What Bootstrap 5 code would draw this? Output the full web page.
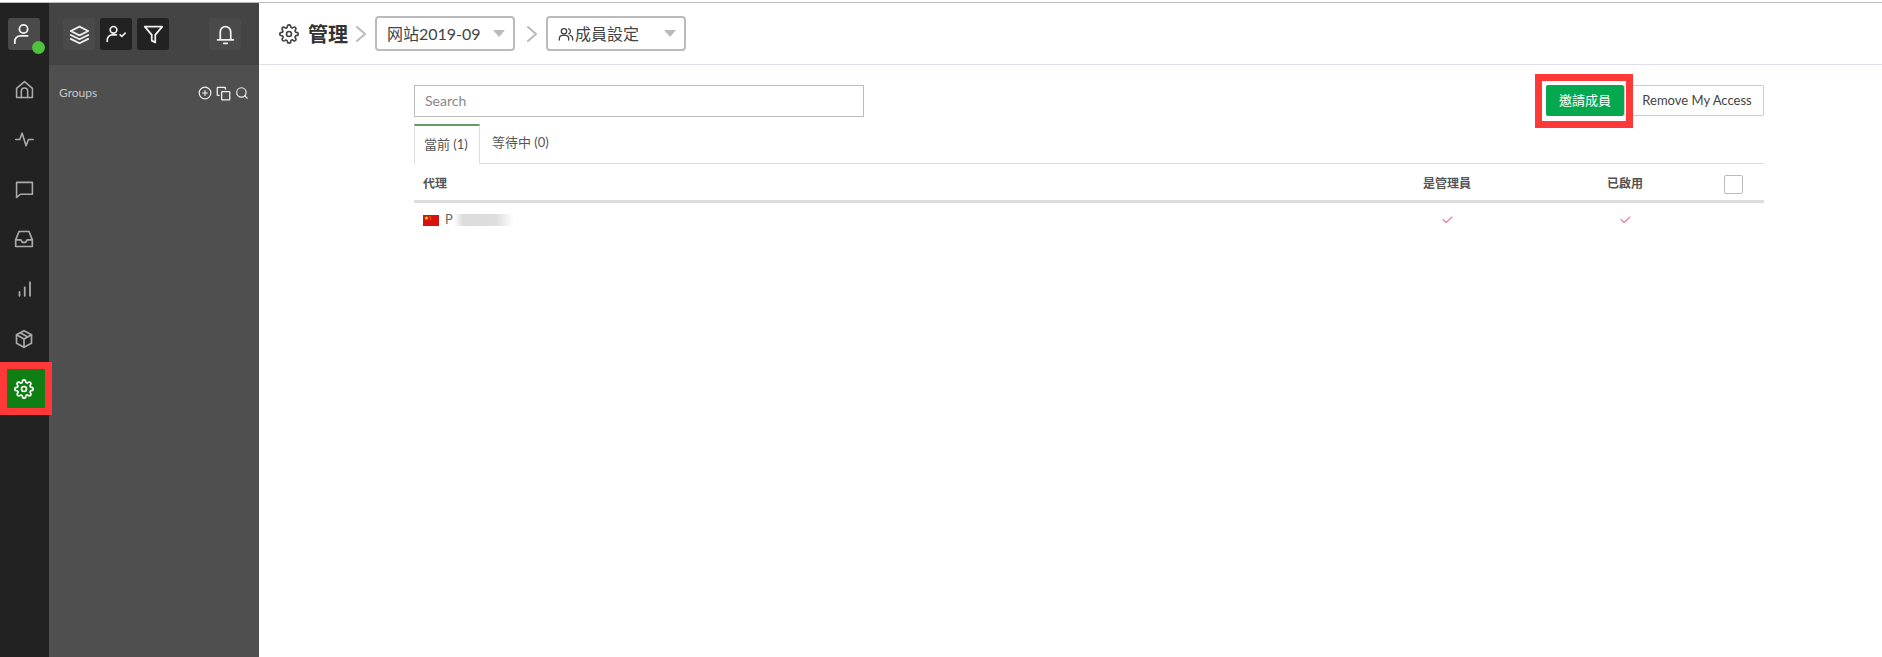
<!DOCTYPE html>
<html lang="zh-Hant">
<head>
<meta charset="utf-8">
<title>成員設定</title>
<link href="https://cdn.jsdelivr.net/npm/bootstrap@5.3.0/dist/css/bootstrap.min.css" rel="stylesheet">
<style>
html,body{height:100%;overflow:hidden}
body{font-family:Lato,"Noto Sans CJK TC",sans-serif;font-size:13px;color:#444;background:#fff}
svg{display:block;fill:none;stroke:currentColor;stroke-width:2;stroke-linecap:round;stroke-linejoin:round}
.topline{height:3px;border-bottom:1px solid #bbb}
.app{height:654px}
.rail{width:49px;background:#222;color:#aaa;flex:none}
.railtop{height:61px;padding:15px 8px 0}
.sq{width:32px;height:32px;border-radius:3px;color:#f0f0f0;background:#4a4a4a}
.sq.dark{background:#222}
.statusdot{width:13px;height:13px;background:#4ec23a;border-radius:50%;right:-5px;bottom:-4px}
.railitem{height:50px;color:#aaa;padding-right:1px}
.railactive{width:38px;height:39px;background:#0f7f14;color:#fff;margin:9px 0 0 7px;padding-right:4px}
.railslot{height:50px;margin-top:-4px}
.frame{border:7px solid #ff3838;pointer-events:none}
.frame-rail{left:-7px;top:-7px;width:52px;height:53px}
.frame-btn{left:-11px;top:-11px;width:98px;height:54px}
.panel{width:210px;background:#4f4f4f;color:#ccc;flex:none}
.paneltop{height:62px;background:#444;padding:15px 18px 0 14px}
.gapbox{margin-left:5px}
.panelrow{padding:20px 10px 0 10px;font-size:12px;color:#c8c8c8;line-height:16px}
.toolicons{gap:4px;color:#f2f2f2}
.main{min-width:0}
.crumb{height:62px;border-bottom:1px solid #dde;padding:0 0 0 20px;color:#444}
.crumbtitle{font-size:20px;font-weight:700;color:#333;margin-left:9px;line-height:1}
.chev{color:#bbb;margin:0 9px 0 8px}
.chev2{margin:0 9px 0 12px}
.pick{width:140px;height:35px;border:2px solid #bbb;border-radius:4px;padding:0 8px 0 10px;font-size:16px;color:#444;background:#fff}
.pickicon{margin-right:1px}
.caret{width:0;height:0;border-left:6.5px solid transparent;border-right:6.5px solid transparent;border-top:7px solid #bbb}
.content{padding:0 118px 0 155px}
.toolrow{padding-top:20px;height:59px}
.searchbox{width:450px;height:32px;border:1px solid #bbb;border-radius:0;font-size:14px;padding:0 10px 2px;color:#444}
.searchbox::placeholder{color:#888}
.invite{width:78px;height:31px;background:#04a84f;border:0;border-radius:2px;color:#fff;font-size:13px;padding:0}
.invite:hover{background:#04a84f;color:#fff}
.leave{width:140px;height:31px;background:#fff;border:1px solid #ccc;border-radius:2px;color:#444;font-size:13px;padding:0 0 0 6px}
.tabrow{border-bottom:1px solid #ddd;height:40px}
.tabitem{padding:0 10px;height:40px;line-height:37px;color:#555}
.tabon{width:66px;border-top:2px solid #6a9a6a;border-left:1px solid #ddd;border-right:1px solid #ddd;background:#fff;height:40px;margin-bottom:-1px;padding:0 9px;white-space:nowrap}
.tabitem2{padding-left:12px}
.grid-head,.grid-row{display:grid;grid-template-columns:1fr 178px 178px 50px;align-items:center}
.grid-head{height:39px;padding-top:4px;border-bottom:3px solid #ddd;font-size:12px;font-weight:700;color:#555;padding-left:9px}
.grid-row{height:34px;font-size:13px;color:#666;padding-left:9px}
.gc{text-align:center}
.tick{width:19px;height:19px;border:1px solid #bbb;border-radius:2px;display:block;margin-left:10px}
.blurred{width:60px;height:12px;background:linear-gradient(90deg,#fff 0,#dcdcdc 15%,#dedede 70%,#f4f4f4 90%,#fff 100%);margin-left:1px}
.pinktick{color:#f0779b;margin:0 auto;stroke-width:1.1}
.flagicon{stroke:none;margin-right:6px}
</style>
</head>
<body>
<div class="topline"></div>
<div class="app d-flex">
  <nav class="rail d-flex flex-column">
    <div class="railtop">
      <div class="sq position-relative d-flex align-items-center justify-content-center">
        <svg width="22" height="22" viewBox="0 0 24 24" stroke-width="2.5"><circle cx="11.5" cy="6.5" r="4.5"/><path d="M2 22v-2a6 6 0 0 1 6-6h8"/></svg>
        <span class="statusdot position-absolute"></span>
      </div>
    </div>
    <a class="railitem d-flex align-items-center justify-content-center"><svg width="19" height="19" viewBox="0 0 24 24"><path d="M2 10.5 12 2l10 8.5V22H2z"/><path d="M8 22v-8a4 4 0 0 1 8 0v8"/></svg></a>
    <a class="railitem d-flex align-items-center justify-content-center"><svg width="19" height="19" viewBox="0 0 24 24"><path d="M1 12h5l3-8 5 16 3-8h6"/></svg></a>
    <a class="railitem d-flex align-items-center justify-content-center"><svg width="19" height="19" viewBox="0 0 24 24"><path d="M2 3h20v15H7l-5 4z"/></svg></a>
    <a class="railitem d-flex align-items-center justify-content-center"><svg width="20" height="20" viewBox="0 0 24 24"><path d="M2 13 6 3h12l4 10v8H2z"/><path d="M2 13h6l2 3h4l2-3h6"/></svg></a>
    <a class="railitem d-flex align-items-center justify-content-center"><svg width="18" height="18" viewBox="0 0 24 24"><path d="M6 21v-5M13 21V10M20 21V3" stroke-width="2.4"/></svg></a>
    <a class="railitem d-flex align-items-center justify-content-center"><svg width="20" height="20" viewBox="0 0 24 24"><path d="M12 2 21 7v10l-9 5-9-5V7z"/><path d="M3 7l9 5 9-5M12 12v10M7.5 4.5l9 5"/></svg></a>
    <div class="railslot">
      <div class="railactive position-relative d-flex align-items-center justify-content-center">
        <svg width="20" height="20" viewBox="0 0 24 24" stroke-width="2.2"><circle cx="12" cy="12" r="3"/><path d="M19.4 15a1.65 1.65 0 0 0 .33 1.82l.06.06a2 2 0 1 1-2.83 2.83l-.06-.06a1.65 1.65 0 0 0-2.8 1.17V21a2 2 0 0 1-4 0v-.09a1.65 1.65 0 0 0-2.82-1.17l-.06.06a2 2 0 1 1-2.83-2.83l.06-.06a1.65 1.65 0 0 0-1.17-2.8H3a2 2 0 0 1 0-4h.09a1.65 1.65 0 0 0 1.17-2.82l-.06-.06a2 2 0 1 1 2.83-2.83l.06.06a1.65 1.65 0 0 0 1.82.33H9a1.65 1.65 0 0 0 1-1.51V3a2 2 0 0 1 4 0v.09a1.65 1.65 0 0 0 2.82 1.17l.06-.06a2 2 0 1 1 2.83 2.83l-.06.06a1.65 1.65 0 0 0-.33 1.82V9a1.65 1.65 0 0 0 1.51 1H21a2 2 0 0 1 0 4h-.09a1.65 1.65 0 0 0-1.51 1z"/></svg>
        <span class="frame frame-rail position-absolute"></span>
      </div>
    </div>
  </nav>
  <aside class="panel d-flex flex-column">
    <div class="paneltop d-flex">
      <div class="sq d-flex align-items-center justify-content-center"><svg width="21" height="21" viewBox="0 0 24 24"><path d="M12 3 2 8l10 5 10-5z"/><path d="m2 12.5 10 5 10-5M2 17l10 5 10-5"/></svg></div>
      <div class="sq dark gapbox d-flex align-items-center justify-content-center"><svg width="20" height="20" viewBox="0 0 24 24"><circle cx="9" cy="7" r="4"/><path d="M1.5 21v-2a6 6 0 0 1 6-6h5"/><path d="m17 13 2 2 4-4"/></svg></div>
      <div class="sq dark gapbox d-flex align-items-center justify-content-center"><svg width="21" height="21" viewBox="0 0 24 24"><path d="M2 3h20l-8 9.5V21l-4-2v-6.5z"/></svg></div>
      <div class="sq d-flex align-items-center justify-content-center ms-auto"><svg width="21" height="21" viewBox="0 0 24 24"><path d="M18 18V9a6 6 0 0 0-12 0v9M3 18h18M10 22h4"/></svg></div>
    </div>
    <div class="panelrow d-flex align-items-center justify-content-between">
      <span>Groups</span>
      <span class="toolicons d-flex">
        <svg width="14" height="14" viewBox="0 0 24 24" stroke-width="3.2"><circle cx="12" cy="12" r="10"/><path d="M12 8v8M8 12h8"/></svg>
        <svg width="15" height="15" viewBox="0 0 24 24" stroke-width="3"><rect x="9" y="9" width="13" height="13" rx="1"/><path d="M5 15H3a1 1 0 0 1-1-1V3a1 1 0 0 1 1-1h11a1 1 0 0 1 1 1v2"/></svg>
        <svg width="14" height="14" viewBox="0 0 24 24" stroke-width="3.2"><circle cx="11" cy="11" r="8"/><path d="m21 21-4.3-4.3"/></svg>
      </span>
    </div>
  </aside>
  <main class="main flex-grow-1 d-flex flex-column">
    <header class="crumb d-flex align-items-center">
      <svg width="20" height="20" viewBox="0 0 24 24" stroke-width="1.5"><circle cx="12" cy="12" r="3"/><path d="M19.4 15a1.65 1.65 0 0 0 .33 1.82l.06.06a2 2 0 1 1-2.83 2.83l-.06-.06a1.65 1.65 0 0 0-2.8 1.17V21a2 2 0 0 1-4 0v-.09a1.65 1.65 0 0 0-2.82-1.17l-.06.06a2 2 0 1 1-2.83-2.83l.06-.06a1.65 1.65 0 0 0-1.17-2.8H3a2 2 0 0 1 0-4h.09a1.65 1.65 0 0 0 1.17-2.82l-.06-.06a2 2 0 1 1 2.83-2.83l.06.06a1.65 1.65 0 0 0 1.82.33H9a1.65 1.65 0 0 0 1-1.51V3a2 2 0 0 1 4 0v.09a1.65 1.65 0 0 0 2.82 1.17l.06-.06a2 2 0 1 1 2.83 2.83l-.06.06a1.65 1.65 0 0 0-.33 1.82V9a1.65 1.65 0 0 0 1.51 1H21a2 2 0 0 1 0 4h-.09a1.65 1.65 0 0 0-1.51 1z"/></svg>
      <span class="crumbtitle">管理</span>
      <svg class="chev" width="10" height="16" viewBox="0 0 10 16" stroke-width="1.6"><path d="m1 1 8 7-8 7"/></svg>
      <div class="pick d-flex align-items-center justify-content-between"><span>网站2019-09</span><span class="caret"></span></div>
      <svg class="chev chev2" width="10" height="16" viewBox="0 0 10 16" stroke-width="1.6"><path d="m1 1 8 7-8 7"/></svg>
      <div class="pick d-flex align-items-center justify-content-between">
        <span class="d-flex align-items-center"><svg class="pickicon" width="16" height="16" viewBox="0 0 24 24" stroke-width="1.7"><circle cx="9" cy="8" r="4"/><path d="M2 21v-2a5 5 0 0 1 5-5h4a5 5 0 0 1 5 5v2M16 4.2a4 4 0 0 1 0 7.6M18 14.2a5 5 0 0 1 4 4.8v2"/></svg>成員設定</span><span class="caret"></span>
      </div>
    </header>
    <section class="content">
      <div class="toolrow d-flex justify-content-between align-items-start">
        <input class="searchbox form-control" type="text" placeholder="Search">
        <div class="d-flex">
          <div class="position-relative">
            <button class="invite btn" type="button">邀請成員</button>
            <span class="frame frame-btn position-absolute"></span>
          </div>
          <button class="leave btn" type="button">Remove My Access</button>
        </div>
      </div>
      <div class="tabrow d-flex">
        <div class="tabon tabitem">當前 (1)</div>
        <div class="tabitem tabitem2">等待中 (0)</div>
      </div>
      <div class="grid-head">
        <span>代理</span>
        <span class="gc">是管理員</span>
        <span class="gc">已啟用</span>
        <span><span class="tick"></span></span>
      </div>
      <div class="grid-row">
        <span class="d-flex align-items-center">
          <svg class="flagicon" width="16" height="11" viewBox="0 0 16 11"><rect width="16" height="11" fill="#d8120f"/><circle cx="3.5" cy="3" r="1.6" fill="#ffd400"/><circle cx="7" cy="1.8" r=".6" fill="#ffd400"/><circle cx="7.6" cy="4" r=".6" fill="#ffd400"/></svg>
          <span>P</span><span class="blurred"></span>
        </span>
        <span class="gc"><svg class="pinktick" width="11" height="8" viewBox="0 0 11 8"><path d="m1 3.5 3 3L10 1"/></svg></span>
        <span class="gc"><svg class="pinktick" width="11" height="8" viewBox="0 0 11 8"><path d="m1 3.5 3 3L10 1"/></svg></span>
        <span></span>
      </div>
    </section>
  </main>
</div>
<script src="https://cdn.jsdelivr.net/npm/bootstrap@5.3.0/dist/js/bootstrap.bundle.min.js"></script>
</body>
</html>
